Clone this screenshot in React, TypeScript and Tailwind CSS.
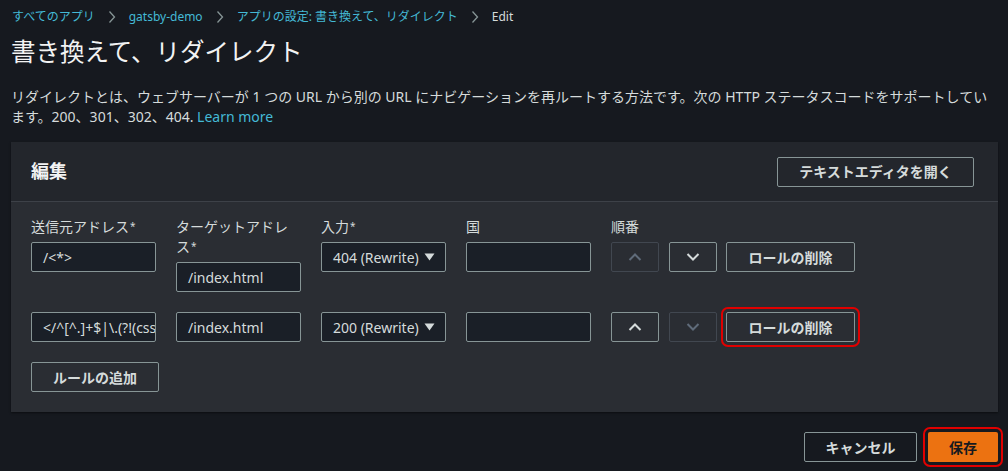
import React from "react";

const Chevron = () => (
  <svg width="10" height="14" viewBox="0 0 10 14" className="mx-[12px] shrink-0">
    <path d="M2.5 1.5 L7.5 7 L2.5 12.5" fill="none" stroke="#879596" strokeWidth="1.3" />
  </svg>
);

const Up = ({ disabled }: { disabled?: boolean }) => (
  <svg width="16" height="10" viewBox="0 0 16 10">
    <path d="M2.5 8 L8 2.5 L13.5 8" fill="none" stroke={disabled ? "#5f6b7a" : "#d5dbdb"} strokeWidth="2" />
  </svg>
);
const Down = ({ disabled }: { disabled?: boolean }) => (
  <svg width="16" height="10" viewBox="0 0 16 10">
    <path d="M2.5 2 L8 7.5 L13.5 2" fill="none" stroke={disabled ? "#5f6b7a" : "#d5dbdb"} strokeWidth="2" />
  </svg>
);

const Star = () => <sup className="text-[10px] ml-[1px] relative top-[-2px]">*</sup>;

const inputCls =
  "h-[30px] w-[125px] border border-[#879596] rounded-[2px] bg-[#1a1f27] pl-[11px] pr-[3px] flex items-center text-[14px] text-[#d5dbdb] overflow-hidden whitespace-nowrap";

const btn =
  "h-[30px] border border-[#879596] rounded-[2px] flex items-center justify-center text-[14px] font-bold text-[#d5dbdb]";

function OrderBtn({ dir, disabled }: { dir: "up" | "down"; disabled?: boolean }) {
  return (
    <div
      className={`h-[30px] w-[48px] rounded-[2px] border flex items-center justify-center ${
        disabled ? "border-[#414750]" : "border-[#879596]"
      }`}
    >
      {dir === "up" ? <Up disabled={disabled} /> : <Down disabled={disabled} />}
    </div>
  );
}

const Arrow = () => (
  <svg width="11" height="8" viewBox="0 0 11 8" className="ml-[5px]">
    <path d="M0.5 0.5 L10.5 0.5 L5.5 7.5 Z" fill="#d5dbdb" />
  </svg>
);

export default function App() {
  return (
    <div className="min-h-[471px] w-[1008px] bg-[#16191f] pl-[11px] pr-[10px] text-[#d5dbdb] font-['Noto_Sans','Noto_Sans_CJK_JP',sans-serif]">
      <nav className="flex items-center h-[20px] pt-[7px] text-[12px] leading-[20px] box-content">
        <span className="text-[#44b9d6] ml-[1px]">すべてのアプリ</span>
        <Chevron />
        <span className="text-[#44b9d6]">gatsby-demo</span>
        <Chevron />
        <span className="text-[#44b9d6]">アプリの設定: 書き換えて、リダイレクト</span>
        <Chevron />
        <span className="text-[#d5dbdb]">Edit</span>
      </nav>
      <h1 className="mt-[7px] text-[24.5px] leading-[36px] text-[#f2f3f3] font-normal">書き換えて、リダイレクト</h1>
      <p className="mt-[17px] text-[14px] leading-[20px] text-[#d5dbdb] pr-[8px]">
        リダイレクトとは、ウェブサーバーが 1 つの URL から別の URL にナビゲーションを再ルートする方法です。次の HTTP ステータスコードをサポートしています。200、301、302、404.{" "}
        <span className="text-[#44b9d6]">Learn more</span>
      </p>

      <section className="mt-[15px] w-[987px] bg-[#2a2d33] shadow-[0_1px_2px_rgba(0,0,0,0.5)]">
        <header className="h-[60px] bg-[#23262c] border-b border-[#3d4148] flex items-center justify-between pl-[20px] pr-[24px]">
          <h2 className="text-[18px] font-bold text-[#f2f3f3]">編集</h2>
          <div className={`${btn} w-[197px]`}>テキストエディタを開く</div>
        </header>
        <div className="pl-[20px] pt-[15px] pb-[20px]">
          <div className="flex gap-x-[20px] items-start">
            <div className="w-[125px]">
              <div className="text-[14px] leading-[20px] mb-[5px]">送信元アドレス<Star /></div>
              <div className={inputCls}>/&lt;*&gt;</div>
            </div>
            <div className="w-[125px]">
              <div className="text-[14px] leading-[20px] mb-[5px]">ターゲットアドレス<Star /></div>
              <div className={inputCls}>/index.html</div>
            </div>
            <div className="w-[125px]">
              <div className="text-[14px] leading-[20px] mb-[5px]">入力<Star /></div>
              <div className={inputCls}>404 (Rewrite)<Arrow /></div>
            </div>
            <div className="w-[125px]">
              <div className="text-[14px] leading-[20px] mb-[5px]">国</div>
              <div className={inputCls}></div>
            </div>
            <div>
              <div className="text-[14px] leading-[20px] mb-[5px]">順番</div>
              <div className="flex gap-[10px]">
                <OrderBtn dir="up" disabled />
                <OrderBtn dir="down" />
                <div className={`${btn} w-[129px] -ml-[1px]`}>ロールの削除</div>
              </div>
            </div>
          </div>

          <div className="flex gap-x-[20px] items-start mt-[20px]">
            <div className={inputCls}>&lt;/^[^.]+$|\.(?!(css|gif|ico|jpg|js|png|txt|svg|woff|ttf|map|json)$)([^.]+$)/&gt;</div>
            <div className={inputCls}>/index.html</div>
            <div className={inputCls}>200 (Rewrite)<Arrow /></div>
            <div className={inputCls}></div>
            <div className="flex gap-[10px]">
              <OrderBtn dir="up" />
              <OrderBtn dir="down" disabled />
              <div className={`${btn} w-[129px] -ml-[1px] outline-2 outline-offset-[3px] outline-[#e00000] rounded-[2px]`}>ロールの削除</div>
            </div>
          </div>

          <div className={`${btn} w-[128px] mt-[20px]`}>ルールの追加</div>
        </div>
      </section>

      <div className="flex justify-end gap-[11px] mt-[20px] w-[987px]">
        <div className={`${btn} w-[113px]`}>キャンセル</div>
        <div className="h-[30px] w-[70px] rounded-[2px] bg-[#ec7211] flex items-center justify-center text-[14px] font-bold text-[#16191f] outline-2 outline-offset-[3px] outline-[#e00000]">保存</div>
      </div>
    </div>
  );
}
